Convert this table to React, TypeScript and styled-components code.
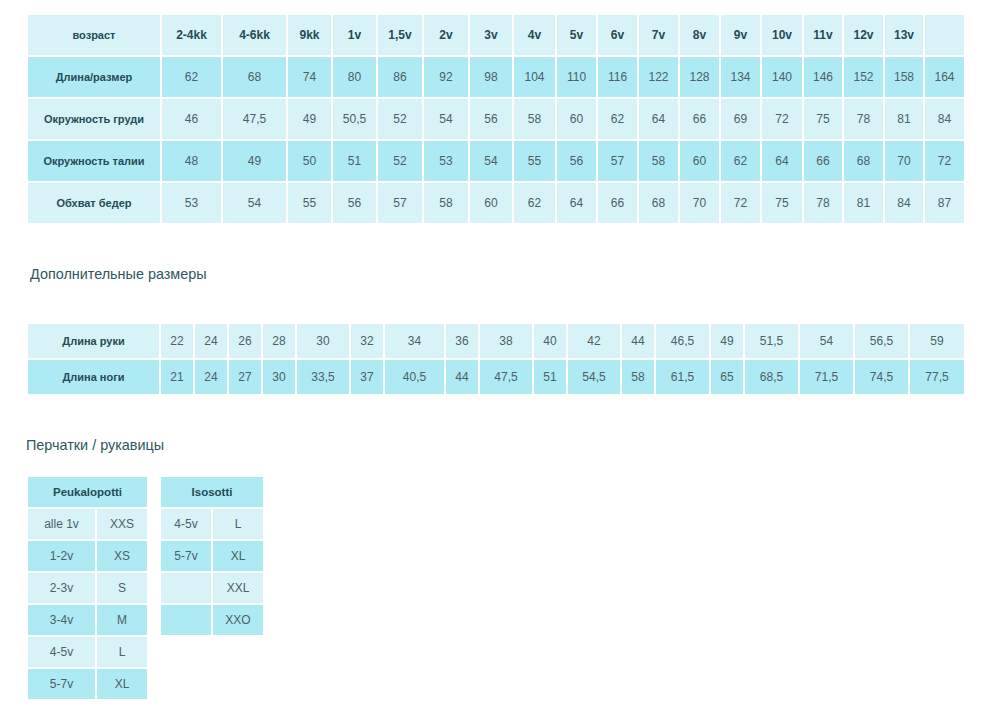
import styled, { createGlobalStyle } from "styled-components";

const GlobalStyle = createGlobalStyle`
  html, body {
    margin: 0;
    padding: 0;
    background: #FFFFFF;
  }
  body {
    font-family: "Liberation Sans", Arial, sans-serif;
  }
`;

const LIGHT = "#D8F3F8";
const DARK = "#AEEAF4";

const Page = styled.div`
  display: flex;
  flex-direction: column;
  align-items: flex-start;
  padding: 13px 0 0 26px;
`;

const SizeTable = styled.table`
  border-collapse: separate;
  border-spacing: 2px;
  font-size: 12px;
`;

const Col = styled.col<{ $w: number }>`
  width: ${(p) => p.$w}px;
`;

const Row = styled.tr<{ $dark?: boolean }>`
  background-color: ${(p) => (p.$dark ? DARK : LIGHT)};
`;

const Cell = styled.td<{ $bold?: boolean; $h: number; $size?: number }>`
  height: ${(p) => p.$h}px;
  padding: 0;
  text-align: center;
  vertical-align: middle;
  white-space: nowrap;
  font-size: ${(p) => p.$size ?? 12}px;
  font-weight: ${(p) => (p.$bold ? 700 : 400)};
  color: ${(p) => (p.$bold ? "#254B55" : "#4D6066")};
`;

const Heading = styled.h3<{ $indent: number; $top: number; $bottom: number }>`
  margin: ${(p) => p.$top}px 0 ${(p) => p.$bottom}px ${(p) => p.$indent}px;
  font-size: 14.4px;
  font-weight: 400;
  line-height: 18px;
  color: #2E5660;
`;

const GloveRow = styled.div`
  display: flex;
  align-items: flex-start;
  gap: 10px;
`;

const mainCols = [132, 59, 63, 43, 43, 44, 44, 42, 41, 39, 39, 39, 39, 39, 40, 38, 39, 38, 39];

const mainRows: { label: string; dark: boolean; values: string[] }[] = [
  {
    label: "возраст",
    dark: false,
    values: ["2-4kk", "4-6kk", "9kk", "1v", "1,5v", "2v", "3v", "4v", "5v", "6v", "7v", "8v", "9v", "10v", "11v", "12v", "13v", ""],
  },
  {
    label: "Длина/размер",
    dark: true,
    values: ["62", "68", "74", "80", "86", "92", "98", "104", "110", "116", "122", "128", "134", "140", "146", "152", "158", "164"],
  },
  {
    label: "Окружность груди",
    dark: false,
    values: ["46", "47,5", "49", "50,5", "52", "54", "56", "58", "60", "62", "64", "66", "69", "72", "75", "78", "81", "84"],
  },
  {
    label: "Окружность талии",
    dark: true,
    values: ["48", "49", "50", "51", "52", "53", "54", "55", "56", "57", "58", "60", "62", "64", "66", "68", "70", "72"],
  },
  {
    label: "Обхват бедер",
    dark: false,
    values: ["53", "54", "55", "56", "57", "58", "60", "62", "64", "66", "68", "70", "72", "75", "78", "81", "84", "87"],
  },
];

const extraCols = [131, 32, 32, 32, 32, 52, 32, 59, 32, 52, 32, 52, 32, 53, 32, 53, 53, 53, 54];

const extraRows = [
  {
    label: "Длина руки",
    dark: false,
    values: ["22", "24", "26", "28", "30", "32", "34", "36", "38", "40", "42", "44", "46,5", "49", "51,5", "54", "56,5", "59"],
  },
  {
    label: "Длина ноги",
    dark: true,
    values: ["21", "24", "27", "30", "33,5", "37", "40,5", "44", "47,5", "51", "54,5", "58", "61,5", "65", "68,5", "71,5", "74,5", "77,5"],
  },
];

const gloves = [
  {
    title: "Peukalopotti",
    cols: [67, 50],
    rows: [
      ["alle 1v", "XXS"],
      ["1-2v", "XS"],
      ["2-3v", "S"],
      ["3-4v", "M"],
      ["4-5v", "L"],
      ["5-7v", "XL"],
    ],
  },
  {
    title: "Isosotti",
    cols: [50, 50],
    rows: [
      ["4-5v", "L"],
      ["5-7v", "XL"],
      ["", "XXL"],
      ["", "XXO"],
    ],
  },
];

const App = () => {
  return (
    <>
      <GlobalStyle />
      <Page>
        <SizeTable>
          <colgroup>
            {mainCols.map((w, i) => (
              <Col key={i} $w={w} />
            ))}
          </colgroup>
          <tbody>
            {mainRows.map((row, r) => (
              <Row key={row.label} $dark={row.dark}>
                <Cell $bold $size={11} $h={40}>
                  {row.label}
                </Cell>
                {row.values.map((v, i) => (
                  <Cell key={i} $bold={r === 0} $h={40}>
                    {v}
                  </Cell>
                ))}
              </Row>
            ))}
          </tbody>
        </SizeTable>

        <Heading $indent={4} $top={40} $bottom={39}>
          Дополнительные размеры
        </Heading>

        <SizeTable>
          <colgroup>
            {extraCols.map((w, i) => (
              <Col key={i} $w={w} />
            ))}
          </colgroup>
          <tbody>
            {extraRows.map((row) => (
              <Row key={row.label} $dark={row.dark}>
                <Cell $bold $size={11} $h={34}>
                  {row.label}
                </Cell>
                {row.values.map((v, i) => (
                  <Cell key={i} $h={34}>
                    {v}
                  </Cell>
                ))}
              </Row>
            ))}
          </tbody>
        </SizeTable>

        <Heading $indent={0} $top={40} $bottom={21}>
          Перчатки / рукавицы
        </Heading>

        <GloveRow>
          {gloves.map((g) => (
            <SizeTable key={g.title}>
              <colgroup>
                {g.cols.map((w, i) => (
                  <Col key={i} $w={w} />
                ))}
              </colgroup>
              <tbody>
                <Row $dark>
                  <Cell colSpan={2} $bold $size={11.5} $h={30}>
                    {g.title}
                  </Cell>
                </Row>
                {g.rows.map((r, i) => (
                  <Row key={i} $dark={i % 2 === 1}>
                    <Cell $h={30}>{r[0]}</Cell>
                    <Cell $h={30}>{r[1]}</Cell>
                  </Row>
                ))}
              </tbody>
            </SizeTable>
          ))}
        </GloveRow>
      </Page>
    </>
  );
};

export default App;
